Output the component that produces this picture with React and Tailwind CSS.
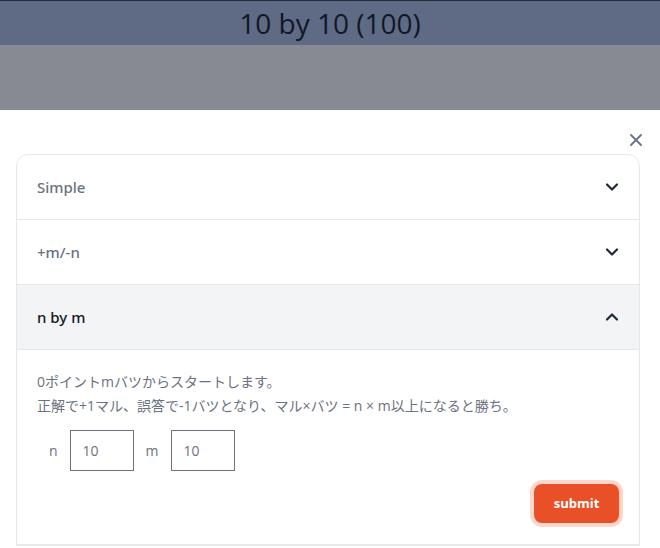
import React from "react";

const Chevron = ({ up }) => (
  <svg width="16" height="16" viewBox="0 0 16 16" fill="none" stroke="#1f2937" strokeWidth="2.2" strokeLinecap="round" strokeLinejoin="round">
    {up ? <path d="M3 10.5L8 5.5L13 10.5" /> : <path d="M3 5.5L8 10.5L13 5.5" />}
  </svg>
);

export default function App() {
  const font = { fontFamily: '"Open Sans", "Noto Sans CJK JP", sans-serif' };
  const rowFont = { fontFamily: '"Noto Sans", "Open Sans", sans-serif' };
  return (
    <div className="w-[660px] h-[548px] overflow-hidden bg-white flex flex-col" style={font}>
      <div className="h-[45px] shrink-0 bg-[#5f6b84] border-t border-[#1f2937] flex items-center justify-center">
        <span className="text-[28px] font-normal text-[#111827] leading-none">10 by 10 (100)</span>
      </div>
      <div className="h-[65px] shrink-0 bg-[#888a93]" />
      <div className="flex-1 bg-white flex flex-col pl-4 pr-5">
        <div className="h-[44px] flex items-end justify-end pb-[8px] -mr-[2px]">
          <svg width="12" height="12" viewBox="0 0 12 12" stroke="#6b7280" strokeWidth="1.8" strokeLinecap="round">
            <path d="M1 1L11 11M11 1L1 11" />
          </svg>
        </div>
        <div className="border border-[#e5e7eb] rounded-t-xl">
          <div className="flex items-center justify-between pl-5 pr-[19px] h-[64px] text-[15px] font-medium text-[#6b7280]" style={rowFont}>
            <span>Simple</span>
            <Chevron />
          </div>
          <div className="border-t border-[#e5e7eb] flex items-center justify-between pl-5 pr-[19px] h-[65px] text-[15px] font-medium text-[#6b7280]" style={rowFont}>
            <span>+m/-n</span>
            <Chevron />
          </div>
          <div className="border-t border-[#e5e7eb] bg-[#f3f4f6] flex items-center justify-between pl-5 pr-[19px] h-[65px] text-[15px] font-medium text-[#111827]" style={rowFont}>
            <span>n by m</span>
            <Chevron up />
          </div>
          <div className="border-t border-b border-[#e5e7eb] px-5 pt-5 pb-[21px] text-sm text-[#6b7280]">
            <p className="leading-6">0ポイントmバツからスタートします。</p>
            <p className="leading-6">正解で+1マル、誤答で-1バツとなり、マル×バツ = n × m以上になると勝ち。</p>
            <div className="mt-[12px] flex items-center">
              <span className="px-3">n</span>
              <input defaultValue="10" className="w-[64px] h-[41px] box-border border border-[#6b7280] px-3 text-sm text-[#6b7280] outline-none" style={font} />
              <span className="px-3">m</span>
              <input defaultValue="10" className="w-[64px] h-[41px] box-border border border-[#6b7280] px-3 text-sm text-[#6b7280] outline-none" style={font} />
            </div>
            <div className="flex justify-end mt-[13px]">
              <button className="w-[85px] h-[39px] rounded-lg bg-[#ea5028] text-white text-[13px] font-bold ring-4 ring-[#fed7cc]" style={font}>
                submit
              </button>
            </div>
          </div>
        </div>
      </div>
    </div>
  );
}
